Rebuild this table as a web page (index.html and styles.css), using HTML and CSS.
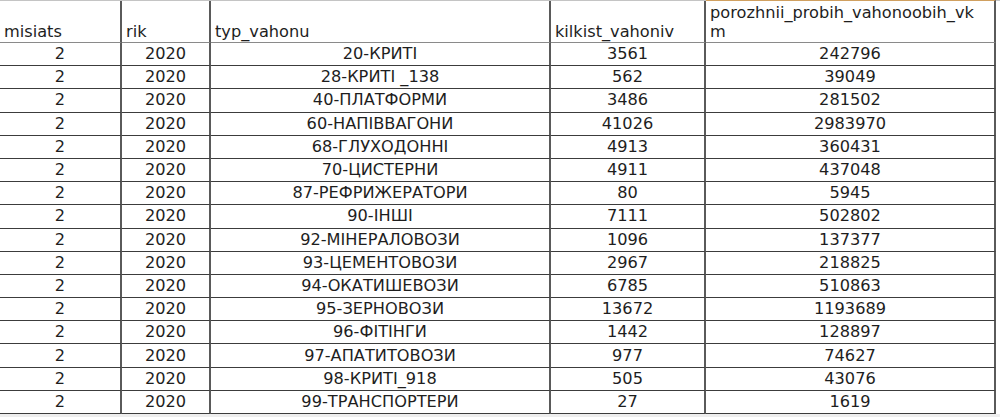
FILE: index.html
```
<!DOCTYPE html>
<html>
<head>
<meta charset="utf-8">
<link rel="stylesheet" href="styles.css">
</head>
<body>
<div class="sheet">
  <div class="grid">
    <div class="h">misiats</div>
    <div class="h">rik</div>
    <div class="h">typ_vahonu</div>
    <div class="h">kilkist_vahoniv</div>
    <div class="h sel">porozhnii_probih_vahonoobih_vk<br>m</div>

    <div class="c">2</div><div class="c">2020</div><div class="c">20-КРИТІ</div><div class="c">3561</div><div class="c">242796</div>
    <div class="c">2</div><div class="c">2020</div><div class="c">28-КРИТІ _138</div><div class="c">562</div><div class="c">39049</div>
    <div class="c">2</div><div class="c">2020</div><div class="c">40-ПЛАТФОРМИ</div><div class="c">3486</div><div class="c">281502</div>
    <div class="c">2</div><div class="c">2020</div><div class="c">60-НАПІВВАГОНИ</div><div class="c">41026</div><div class="c">2983970</div>
    <div class="c">2</div><div class="c">2020</div><div class="c">68-ГЛУХОДОННІ</div><div class="c">4913</div><div class="c">360431</div>
    <div class="c">2</div><div class="c">2020</div><div class="c">70-ЦИСТЕРНИ</div><div class="c">4911</div><div class="c">437048</div>
    <div class="c">2</div><div class="c">2020</div><div class="c">87-РЕФРИЖЕРАТОРИ</div><div class="c">80</div><div class="c">5945</div>
    <div class="c">2</div><div class="c">2020</div><div class="c">90-ІНШІ</div><div class="c">7111</div><div class="c">502802</div>
    <div class="c">2</div><div class="c">2020</div><div class="c">92-МІНЕРАЛОВОЗИ</div><div class="c">1096</div><div class="c">137377</div>
    <div class="c">2</div><div class="c">2020</div><div class="c">93-ЦЕМЕНТОВОЗИ</div><div class="c">2967</div><div class="c">218825</div>
    <div class="c">2</div><div class="c">2020</div><div class="c">94-ОКАТИШЕВОЗИ</div><div class="c">6785</div><div class="c">510863</div>
    <div class="c">2</div><div class="c">2020</div><div class="c">95-ЗЕРНОВОЗИ</div><div class="c">13672</div><div class="c">1193689</div>
    <div class="c">2</div><div class="c">2020</div><div class="c">96-ФІТІНГИ</div><div class="c">1442</div><div class="c">128897</div>
    <div class="c">2</div><div class="c">2020</div><div class="c">97-АПАТИТОВОЗИ</div><div class="c">977</div><div class="c">74627</div>
    <div class="c">2</div><div class="c">2020</div><div class="c">98-КРИТІ_918</div><div class="c">505</div><div class="c">43076</div>
    <div class="c">2</div><div class="c">2020</div><div class="c">99-ТРАНСПОРТЕРИ</div><div class="c">27</div><div class="c">1619</div>
  </div>
</div>
</body>
</html>
```
FILE: styles.css
```
html, body {
  margin: 0;
  padding: 0;
  background: #eeeeee;
}

.sheet {
  width: 1000px;
  height: 414px;
  background: #ffffff;
  border-top: 1px solid #c4c4c4;
  box-sizing: border-box;
}

.grid {
  display: grid;
  width: 996px;
  grid-template-columns: 122px 89px 340px 155px 290px;
  grid-template-rows: 42px repeat(16, 23.2px);
  font-family: "DejaVu Sans", Verdana, sans-serif;
  font-size: 16.2px;
  color: #1e1e1e;
}

.h, .c {
  box-sizing: border-box;
  border-right: 2px solid #5a5a5a;
  border-bottom: 1px solid #3c3c3c;
  white-space: nowrap;
  overflow: hidden;
}

.h {
  display: flex;
  align-items: flex-end;
  padding: 0 0 1px 4px;
  line-height: 19px;
  border-bottom-color: #8a8a8a;
}

.h.sel {
  border-top: 1px solid #d0a060;
  margin-top: -1px;
}

.c {
  display: flex;
  align-items: center;
  justify-content: center;
  line-height: 20px;
}
```
